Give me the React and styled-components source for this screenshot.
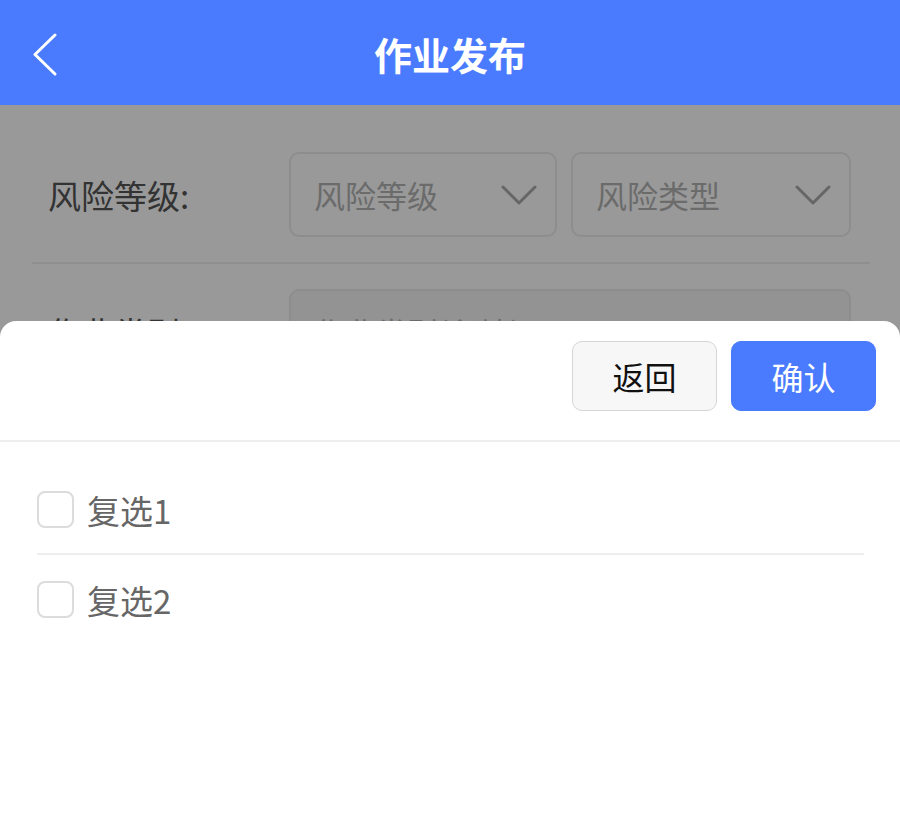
import styled, { createGlobalStyle } from "styled-components";

const GlobalStyle = createGlobalStyle`
  html, body {
    margin: 0;
    padding: 0;
    background: #fff;
    font-family: "Noto Sans CJK SC", "Noto Sans", sans-serif;
  }
  * { box-sizing: border-box; }
`;

const ChevronDown = ({ color = "#aaa" }) => (
  <svg width="36" height="20" viewBox="0 0 36 20" fill="none">
    <path d="M2 2 L18 18 L34 2" stroke={color} strokeWidth="3" strokeLinecap="round" strokeLinejoin="round" />
  </svg>
);

const BackIcon = () => (
  <svg width="26" height="44" viewBox="0 0 26 44" fill="none">
    <path d="M23 2 L3 21.5 L23 41" stroke="#fff" strokeWidth="3" strokeLinecap="round" strokeLinejoin="round" />
  </svg>
);

const rows = [
  { label: "风险等级:", selects: ["风险等级", "风险类型"] },
  { label: "作业类别:", selects: ["作业类别(必填)"], shaded: true },
];

const options = ["复选1", "复选2"];

const App = () => {
  return (
    <>
      <GlobalStyle />
      <Header>
        <BackButton>
          <BackIcon />
        </BackButton>
        <Title>作业发布</Title>
      </Header>
      <Form>
        {rows.map((row) => (
          <FormRow key={row.label}>
            <Label>{row.label}</Label>
            <Selects>
              {row.selects.map((s, i) => (
                <Select
                  key={s}
                  $shaded={row.shaded}
                  $narrow={row.selects.length > 1 && i === 0}
                >
                  <span>{s}</span>
                  <ChevronDown />
                </Select>
              ))}
            </Selects>
          </FormRow>
        ))}
      </Form>
      <Mask />
      <Sheet>
        <SheetBar>
          <Button>返回</Button>
          <Button $primary>确认</Button>
        </SheetBar>
        <OptionList>
          {options.map((o, i) => (
            <OptionRow key={o} $last={i === options.length - 1}>
              <Checkbox />
              <OptionText>{o}</OptionText>
            </OptionRow>
          ))}
        </OptionList>
      </Sheet>
    </>
  );
};

const Header = styled.header`
  position: relative;
  z-index: 2;
  height: 105px;
  background: #4a7bfe;
  display: flex;
  align-items: center;
  justify-content: center;
`;

const BackButton = styled.div`
  position: absolute;
  left: 32px;
  top: 33px;
  display: flex;
`;

const Title = styled.h1`
  margin: 0;
  color: #fff;
  font-size: 38px;
  font-weight: 700;
  line-height: 1;
  padding-top: 2px;
`;

const Form = styled.div`
  padding: 22px 30px 0 32px;
`;

const FormRow = styled.div`
  display: flex;
  align-items: center;
  padding: 25px 19px 25px 0;
  border-bottom: 2px solid #eee;
`;

const Label = styled.div`
  width: 257px;
  padding-left: 16px;
  font-size: 33px;
  color: #555;
  white-space: nowrap;
  overflow: hidden;
`;

const Selects = styled.div`
  flex: 1;
  display: flex;
  gap: 14px;
`;

const Select = styled.div`
  flex: ${({ $narrow }) => ($narrow ? "0 0 268px" : "1")};
  height: 85px;
  border: 2px solid #ececec;
  border-radius: 10px;
  background: ${({ $shaded }) => ($shaded ? "#f5f5f5" : "#fff")};
  display: flex;
  align-items: center;
  justify-content: space-between;
  padding: 0 18px 0 23px;
  font-size: 31px;
  color: #b3b3b3;
`;

const Mask = styled.div`
  position: fixed;
  inset: 0;
  z-index: 1;
  background: rgba(0, 0, 0, 0.4);
`;

const Sheet = styled.div`
  position: fixed;
  left: 0;
  right: 0;
  bottom: 0;
  height: 517px;
  z-index: 3;
  background: #fff;
  border-radius: 16px 16px 0 0;
`;

const SheetBar = styled.div`
  display: flex;
  justify-content: flex-end;
  gap: 14px;
  padding: 20px 24px 29px;
  border-bottom: 2px solid #eee;
`;

const Button = styled.div`
  width: 145px;
  height: 70px;
  border-radius: 10px;
  display: flex;
  align-items: center;
  justify-content: center;
  font-size: 32px;
  border: 1px solid ${({ $primary }) => ($primary ? "#4a7bfe" : "#d6d6d6")};
  background: ${({ $primary }) => ($primary ? "#4a7bfe" : "#f7f7f7")};
  color: ${({ $primary }) => ($primary ? "#fff" : "#111")};
`;

const OptionList = styled.div`
  padding: 24px 36px 0 37px;
`;

const OptionRow = styled.div`
  height: 89px;
  display: flex;
  align-items: center;
  border-bottom: ${({ $last }) => ($last ? "none" : "2px solid #eee")};
`;

const Checkbox = styled.div`
  width: 37px;
  height: 37px;
  border: 2px solid #dcdcdc;
  border-radius: 8px;
  background: #fff;
`;

const OptionText = styled.span`
  margin-left: 13px;
  font-size: 33px;
  color: #666;
`;

export default App;
